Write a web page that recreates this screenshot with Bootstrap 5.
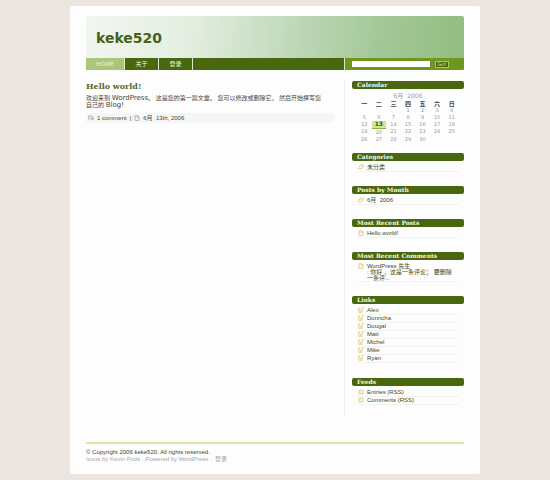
<!DOCTYPE html>
<html lang="zh-CN">
<head>
<meta charset="utf-8">
<meta name="viewport" content="width=device-width, initial-scale=1">
<title>keke520</title>
<link href="https://cdn.jsdelivr.net/npm/bootstrap@5.3.0/dist/css/bootstrap.min.css" rel="stylesheet">
<style>
:root{--deep:#48670f;--leaf:#6f9620;--ink:#3d4a22;--latin:"Liberation Sans","Noto Sans CJK SC",sans-serif;--serif:"DejaVu Serif",serif}
body{background:#ebe6e0;font-family:var(--latin);font-size:6px;line-height:8px;color:var(--ink);padding:6px 70px}
a{color:inherit;text-decoration:none}
a:hover{text-decoration:underline}
.sheet{background:#fdfdfd;padding:10px 16px 11px;border-radius:2px}
.masthead{height:42px;padding:2px 10px 0;background:linear-gradient(97deg,#f2f6f1 0%,#e3eee0 28%,#bfd8b8 55%,#a3c797 78%,#93bd80 100%);border-radius:2px 2px 0 0}
.site-name{font:bold 14px/18px "DejaVu Sans",sans-serif;color:#45611a}
.bar{height:12px;background:var(--deep);color:#f3f7e6;border-radius:0 0 2px 2px;overflow:hidden}
.bar-link{width:34px;border-right:1px solid #dbe8c4;line-height:12px;text-align:center}
.bar-link.current{width:39px;background:#abc67b;color:#e9f3d4;font-family:"DejaVu Sans",sans-serif}
.side{width:120px;flex:none}
.finder{background:var(--leaf);border-left:1px solid #dbe8c4;padding:0 15px 0 7px}
.finder-box{width:78px;height:6px;border:0;border-radius:0;padding:0 2px;font-size:5px;line-height:6px;background:#fff}
.finder-go{width:14px;height:7px;border:1px solid #a9c46e;background:var(--deep);color:#dfeac8;font-size:5px;line-height:5px;font-family:"DejaVu Sans",sans-serif}
.post{padding:10px 10px 0 0}
.post-title{font:bold 8px/12px var(--serif);color:#56692a}
.post-text{margin:3px 0 4px;line-height:7px;color:#444}
.latin{font-size:7px;line-height:6px;font-family:"DejaVu Sans",sans-serif}
.post-meta{background:#f6f6f6;padding:1px 2px;line-height:8px;gap:3px}
.sidebar{border-left:1px solid #ececec;padding-left:7px;padding-bottom:12px;margin-top:11px}
.block{margin-bottom:14px}
.block-dates{margin-bottom:10px}
.block-title{font:bold 6px/8px var(--serif);background:var(--deep);color:#f4f8e8;padding:0 5px;border-radius:2px;margin-bottom:3px}
.entries{padding:0 5px;line-height:7px}
.entries li{display:flex;gap:3px;border-bottom:1px solid #f2f2ee}
.entries svg,.post-meta svg{width:6px;height:6px;flex:none;fill:none;stroke:#ddcf80;stroke-width:1}
.entries svg{margin-left:1px}
.post-meta svg{stroke:#b3b7a3}
.roll{min-height:57px}
.remark{line-height:6px}
.dates{width:calc(100% - 10px);margin:0 5px;table-layout:fixed;text-align:center;font-size:5px;line-height:7px;color:#999;font-family:"DejaVu Sans","Noto Sans CJK SC",sans-serif}
.dates caption{caption-side:top;padding:0;text-align:center;font-size:6px;line-height:8px;color:#999}
.dates th{font-size:6px;line-height:7px;color:#444;padding:0;text-align:center}
.dates td{padding:0}
.dates .today{background:#cfe59a;color:#3c5910;font-weight:bold;border-bottom:1px solid #8bb03c;line-height:6px;font-size:6px}
.colophon{border-top:2px solid #dde8a6;margin-top:25px;padding-top:5px;line-height:7px}
.colophon .credits{color:#a5a5ad}
</style>
<script src="https://cdn.jsdelivr.net/npm/bootstrap@5.3.0/dist/js/bootstrap.bundle.min.js"></script>
</head>
<body>
<svg class="d-none" aria-hidden="true">
<symbol id="tag" viewBox="0 0 6 6"><path d="M.7 3.2 2.5 1h2.8v1.6L3.5 4.8H.7zM3 2.5h1"/></symbol>
<symbol id="page" viewBox="0 0 6 6"><path d="M1 .7h2.6L5 2v3.4H1zM3.4.7v1.6H5"/></symbol>
<symbol id="out" viewBox="0 0 6 6"><path d="M2.4 1.2H.7v4h3.6V3.8M1.8 3 3 4l2-2.6M4 .8h1.6"/></symbol>
<symbol id="feed" viewBox="0 0 6 6"><path d="M1 1.2h4v3.6H1zM2.5 3h1"/></symbol>
<symbol id="talk" viewBox="0 0 6 6"><path d="M.6 1h3.6v2.4H2L1 4.4V3.4H.6zM5.4 2.4v2.2H3"/></symbol>
</svg>
<div class="sheet">
<header>
<div class="masthead d-flex align-items-center"><h1 class="site-name m-0"><a href="#">keke520</a></h1></div>
<div class="bar d-flex">
<nav class="d-flex flex-grow-1">
<a class="bar-link current" href="#">HOME</a>
<a class="bar-link" href="#">关于</a>
<a class="bar-link" href="#">登录</a>
</nav>
<form class="finder side d-flex align-items-center justify-content-between">
<input class="finder-box" type="text" aria-label="Search">
<button class="finder-go d-flex align-items-center justify-content-center p-0" type="submit">Go!</button>
</form>
</div>
</header>
<div class="d-flex">
<main class="post flex-grow-1">
<h2 class="post-title m-0"><a href="#">Hello world!</a></h2>
<p class="post-text">欢迎来到 <span class="latin">WordPress</span>。 这是您的第一篇文章。 您可以修改或删除它， 然后开始撰写您<br>自己的 <span class="latin">Blog!</span></p>
<div class="post-meta d-flex align-items-center">
<svg><use href="#talk"/></svg><a href="#">1 comment</a><span>|</span><svg><use href="#page"/></svg><span>6月 &nbsp;13th, 2006</span>
</div>
</main>
<aside class="sidebar side">
<section class="block block-dates">
<h2 class="block-title">Calendar</h2>
<table class="dates">
<caption>6月 &nbsp;2006</caption>
<thead><tr><th>一</th><th>二</th><th>三</th><th>四</th><th>五</th><th>六</th><th>日</th></tr></thead>
<tbody>
<tr><td colspan="3"></td><td>1</td><td>2</td><td>3</td><td>4</td></tr>
<tr><td>5</td><td>6</td><td>7</td><td>8</td><td>9</td><td>10</td><td>11</td></tr>
<tr><td>12</td><td class="today"><a href="#">13</a></td><td>14</td><td>15</td><td>16</td><td>17</td><td>18</td></tr>
<tr><td>19</td><td>20</td><td>21</td><td>22</td><td>23</td><td>24</td><td>25</td></tr>
<tr><td>26</td><td>27</td><td>28</td><td>29</td><td>30</td><td colspan="2"></td></tr>
</tbody>
</table>
</section>
<section class="block"><h2 class="block-title">Categories</h2>
<ul class="entries list-unstyled m-0"><li><svg><use href="#tag"/></svg><a href="#">未分类</a></li></ul></section>
<section class="block"><h2 class="block-title">Posts by Month</h2>
<ul class="entries list-unstyled m-0"><li><svg><use href="#tag"/></svg><a href="#">6月 &nbsp;2006</a></li></ul></section>
<section class="block"><h2 class="block-title">Most Recent Posts</h2>
<ul class="entries list-unstyled m-0"><li><svg><use href="#page"/></svg><a href="#">Hello world!</a></li></ul></section>
<section class="block"><h2 class="block-title">Most Recent Comments</h2>
<ul class="entries list-unstyled m-0"><li><svg><use href="#page"/></svg><div class="remark"><a href="#">WordPress 先生</a><br>: 你好 ，这是一条评论； 要删除<br>一条评...</div></li></ul></section>
<section class="block"><h2 class="block-title">Links</h2>
<ul class="entries roll list-unstyled m-0 d-flex flex-column justify-content-between">
<li><svg><use href="#out"/></svg><a href="#">Alex</a></li>
<li><svg><use href="#out"/></svg><a href="#">Donncha</a></li>
<li><svg><use href="#out"/></svg><a href="#">Dougal</a></li>
<li><svg><use href="#out"/></svg><a href="#">Matt</a></li>
<li><svg><use href="#out"/></svg><a href="#">Michel</a></li>
<li><svg><use href="#out"/></svg><a href="#">Mike</a></li>
<li><svg><use href="#out"/></svg><a href="#">Ryan</a></li>
</ul></section>
<section><h2 class="block-title">Feeds</h2>
<ul class="entries list-unstyled m-0">
<li><svg><use href="#feed"/></svg><a href="#">Entries (RSS)</a></li>
<li><svg><use href="#feed"/></svg><a href="#">Comments (RSS)</a></li>
</ul></section>
</aside>
</div>
<footer class="colophon">
<div>© Copyright 2006 keke520. All rights reserved.</div>
<div class="credits"><a href="#">Icons by Kevin Potts</a> . Powered by <a href="#">WordPress</a> . &nbsp;<a href="#">登录</a></div>
</footer>
</div>
</body>
</html>
